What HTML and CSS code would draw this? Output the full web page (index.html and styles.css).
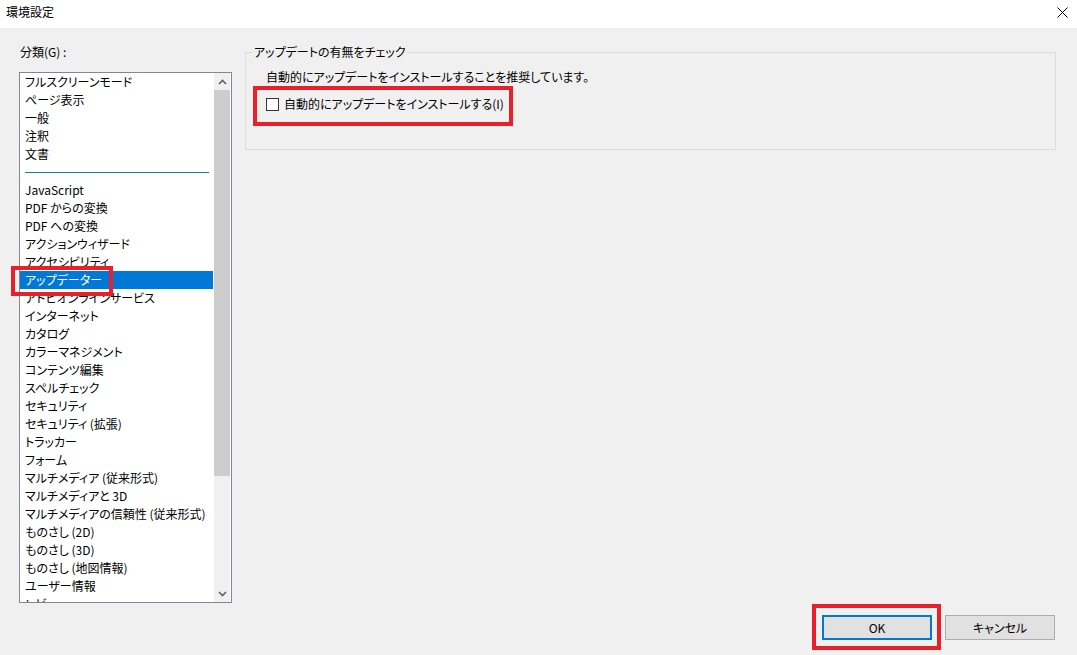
FILE: index.html
```html
<!DOCTYPE html>
<html lang="ja">
  <head>
    <meta charset="UTF-8" />
    <meta name="viewport" content="width=device-width, initial-scale=1.0" />
    <title>環境設定</title>
    <link rel="stylesheet" href="styles.css">
  </head>
  <body>
    <div class="titlebar">
      <span class="title">環境設定</span>
      <span class="close">
        <svg width="11" height="11" viewBox="0 0 11 11">
          <path d="M0.5 0.5 L10.5 10.5 M10.5 0.5 L0.5 10.5" stroke="#000" stroke-width="1" fill="none" />
        </svg>
      </span>
    </div>

    <div class="dialog">
      <div class="content">
        <div class="category">
          <div class="category-label">分類(G) :</div>
          <div class="listbox">
            <ul class="items">
              <li>フルスクリーンモード</li>
              <li>ページ表示</li>
              <li>一般</li>
              <li>注釈</li>
              <li>文書</li>
              <li class="separator"></li>
              <li>JavaScript</li>
              <li>PDF からの変換</li>
              <li>PDF への変換</li>
              <li>アクションウィザード</li>
              <li>アクセシビリティ</li>
              <li class="selected">アップデーター</li>
              <li>アドビオンラインサービス</li>
              <li>インターネット</li>
              <li>カタログ</li>
              <li>カラーマネジメント</li>
              <li>コンテンツ編集</li>
              <li>スペルチェック</li>
              <li>セキュリティ</li>
              <li>セキュリティ (拡張)</li>
              <li>トラッカー</li>
              <li>フォーム</li>
              <li>マルチメディア (従来形式)</li>
              <li>マルチメディアと 3D</li>
              <li>マルチメディアの信頼性 (従来形式)</li>
              <li>ものさし (2D)</li>
              <li>ものさし (3D)</li>
              <li>ものさし (地図情報)</li>
              <li>ユーザー情報</li>
              <li>レビュー</li>
            </ul>
            <div class="scrollbar">
              <div class="arrow">
                <svg width="9" height="6" viewBox="0 0 9 6">
                  <path d="M1 5 L4.5 1.5 L8 5" stroke="#606060" stroke-width="1.6" fill="none" />
                </svg>
              </div>
              <div class="track"><div class="thumb"></div></div>
              <div class="arrow">
                <svg width="9" height="6" viewBox="0 0 9 6">
                  <path d="M1 1 L4.5 4.5 L8 1" stroke="#606060" stroke-width="1.6" fill="none" />
                </svg>
              </div>
            </div>
            <div class="mark mark-list"></div>
          </div>
        </div>

        <div class="panel">
          <fieldset class="group">
            <legend>アップデートの有無をチェック</legend>
            <div class="group-body">
              <p class="note">自動的にアップデートをインストールすることを推奨しています。</p>
              <label class="check">
                <span class="box"></span>
                <span>自動的にアップデートをインストールする(I)</span>
              </label>
              <div class="mark mark-check"></div>
            </div>
          </fieldset>
        </div>
      </div>

      <div class="buttons">
        <div class="btn-wrap">
          <button class="btn default">OK</button>
          <div class="mark mark-ok"></div>
        </div>
        <button class="btn">キャンセル</button>
      </div>
    </div>
  </body>
</html>
```

FILE: styles.css
```css
html,
body {
  height: 100%;
}

body {
  margin: 0;
  padding: 0;
  background-color: #f0f0f0;
  color: #000;
  font-family: "Noto Sans CJK JP", "Noto Sans", sans-serif;
  font-size: 12px;
  font-feature-settings: "palt";
  display: flex;
  flex-direction: column;
  overflow: hidden;
}

.titlebar {
  height: 28px;
  background-color: #fff;
  display: flex;
  align-items: center;
  justify-content: space-between;
  padding: 0 9px 0 6px;
  flex-shrink: 0;
}

.title {
  margin-top: -5px;
}

.close {
  display: flex;
  align-items: center;
  margin-top: -4px;
}

.dialog {
  flex: 1;
  display: flex;
  flex-direction: column;
}

.content {
  flex: 1;
  display: flex;
  align-items: flex-start;
  padding-left: 19px;
}

.category {
  width: 213px;
}

.category-label {
  margin-top: 15px;
  height: 18px;
  line-height: 18px;
  padding-left: 1px;
}

.listbox {
  position: relative;
  margin-top: 11px;
  height: 529px;
  border: 1px solid #828790;
  background-color: #fff;
  display: flex;
}

.items {
  list-style: none;
  margin: 0;
  padding: 0;
  width: 193px;
  overflow: hidden;
}

.items li {
  height: 18px;
  line-height: 18px;
  padding-left: 5px;
  white-space: nowrap;
}

.items li.separator {
  position: relative;
}

.items li.separator::after {
  content: "";
  position: absolute;
  left: 5px;
  right: 4px;
  top: 9px;
  border-top: 1px solid #1f7a9a;
}

.items li.selected {
  background-color: #0078d7;
  color: #fff;
}

.scrollbar {
  width: 16px;
  margin-left: 1px;
  background-color: #f0f0f0;
  display: flex;
  flex-direction: column;
}

.arrow {
  height: 17px;
  display: flex;
  align-items: center;
  justify-content: center;
}

.track {
  flex: 1;
}

.thumb {
  height: 386px;
  background-color: #cdcdcd;
}

.panel {
  flex: 1;
  margin-left: 13px;
  margin-right: 21px;
}

.group {
  margin: 15px 0 0;
  padding: 0;
  border: 1px solid #dcdcdc;
  min-width: 0;
}

.group legend {
  margin-left: 7px;
  padding: 0 1px;
  height: 18px;
  line-height: 18px;
}

.group-body {
  position: relative;
  padding: 7px 20px 36px;
}

.note {
  margin: 0;
  height: 18px;
  line-height: 18px;
}

.check {
  margin-top: 9px;
  display: flex;
  align-items: center;
  height: 18px;
  line-height: 18px;
}

.box {
  width: 11px;
  height: 11px;
  border: 1px solid #333;
  background-color: #fff;
  margin-right: 5px;
}

.buttons {
  display: flex;
  justify-content: flex-end;
  gap: 13px;
  padding: 0 22px 15px 0;
}

.btn-wrap {
  position: relative;
}

.btn {
  width: 110px;
  height: 25px;
  background-color: #e1e1e1;
  border: 1px solid #adadad;
  font-family: inherit;
  font-size: 12px;
  font-feature-settings: "palt";
  color: #000;
  padding: 0;
  display: block;
}

.btn.default {
  border: 2px solid #0078d7;
}

.mark {
  position: absolute;
  border: 4px solid #e8202a;
  pointer-events: none;
}

.mark-list {
  left: -9px;
  top: 193px;
  width: 94px;
  height: 22px;
}

.mark-check {
  left: 7px;
  top: 25px;
  width: 252px;
  height: 32px;
}

.mark-ok {
  left: -10px;
  top: -11px;
  width: 121px;
  height: 38px;
}
```
